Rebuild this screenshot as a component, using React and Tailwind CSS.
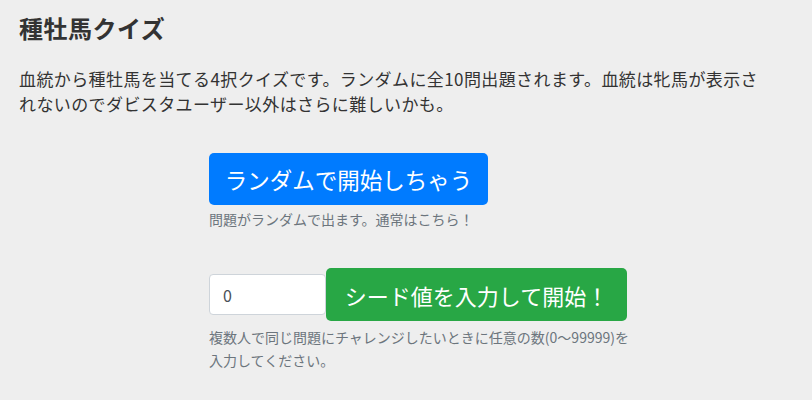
import React, { useState } from "react";

const font = { fontFamily: '"Noto Sans CJK JP", "Noto Sans", sans-serif' };

export default function App() {
  const [seed, setSeed] = useState("0");

  return (
    <div
      className="min-h-[400px] w-full bg-[#eeeeee] pl-[19px] pr-[40px] pt-[12px] text-[#333333]"
      style={font}
    >
      {/* Title */}
      <h1 className="text-[24px] font-bold leading-[32px] tracking-[0.5px]">種牡馬クイズ</h1>

      {/* Description */}
      <p className="mt-[22px] text-[17px] leading-[25px] tracking-[0.4px] text-[#333333]">
        血統から種牡馬を当てる4択クイズです。ランダムに全10問出題されます。血統は牝馬が表示されないのでダビスタユーザー以外はさらに難しいかも。
      </p>

      {/* Random start */}
      <div className="ml-[190px] mt-[37px] flex flex-col items-start">
        <button className="h-[52px] w-[279px] whitespace-nowrap rounded-[5px] bg-[#007bff] text-center text-[22.5px] leading-[36px] text-white">
          ランダムで開始しちゃう
        </button>
        <p className="mt-[4px] text-[14px] leading-[21px] text-[#6c757d]">
          問題がランダムで出ます。通常はこちら！
        </p>
      </div>

      {/* Seed start */}
      <div className="ml-[190px] mt-[38px] flex flex-col">
        <div className="flex items-center">
          <input
            type="text"
            value={seed}
            onChange={(e) => setSeed(e.target.value)}
            className="h-[41px] w-[117px] rounded-[4px] border border-[#ced4da] bg-white px-[13px] text-[16px] text-[#495057] outline-none"
          />
          <button className="h-[53px] w-[301px] whitespace-nowrap rounded-[5px] bg-[#28a745] text-center text-[22px] leading-[36px] text-white">
            シード値を入力して開始！
          </button>
        </div>
        <p className="mt-[5px] w-[425px] text-[14px] leading-[23px] text-[#6c757d]">
          複数人で同じ問題にチャレンジしたいときに任意の数(0〜99999)を入力してください。
        </p>
      </div>
    </div>
  );
}
